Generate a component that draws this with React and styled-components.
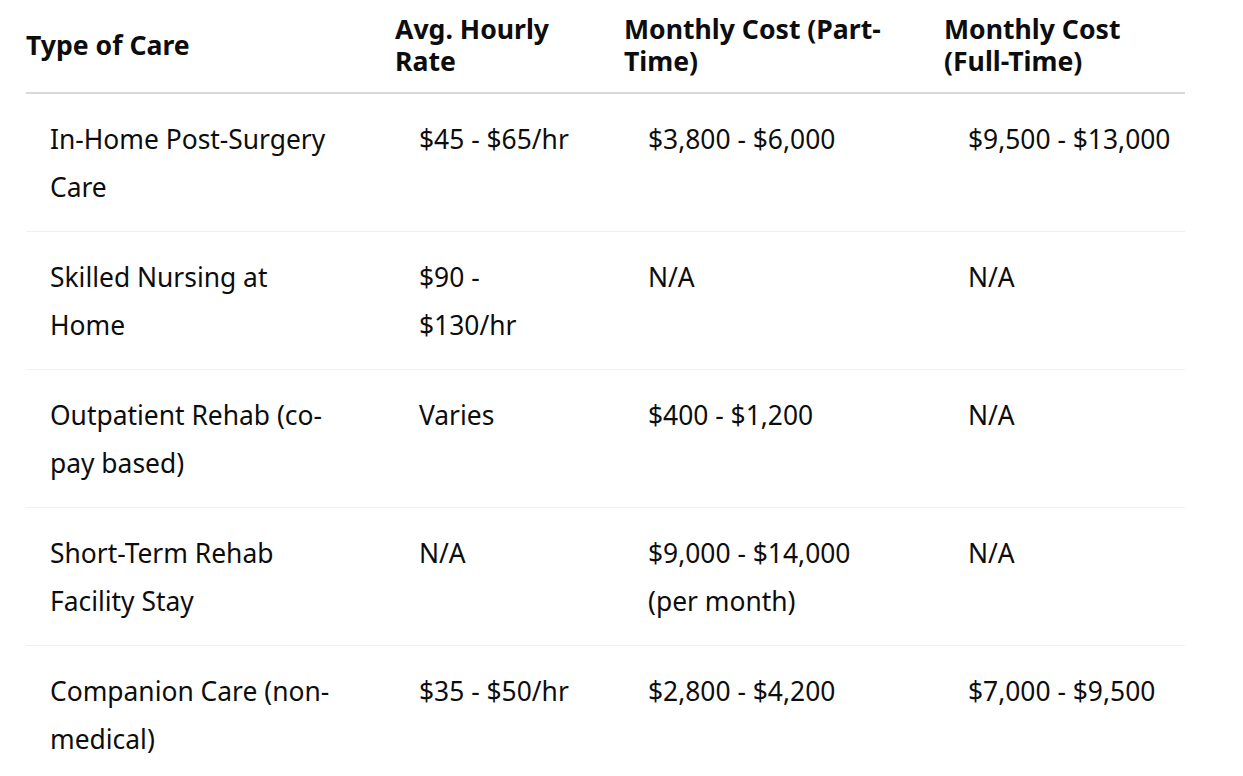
import React from 'react';
import styled, { createGlobalStyle } from 'styled-components';

const GlobalStyle = createGlobalStyle`
  body {
    margin: 0;
    background: #ffffff;
    color: #0d0d0d;
    font-family: 'Noto Sans', 'Open Sans', sans-serif;
  }
`;

// column widths and the right padding that makes each cell wrap like the source
const COLUMNS = [
  { key: 'type', label: 'Type of Care', width: 369, padRight: 58 },
  { key: 'hourly', label: 'Avg. Hourly Rate', width: 229, padRight: 50 },
  { key: 'partTime', label: 'Monthly Cost (Part-Time)', width: 320, padRight: 66 },
  { key: 'fullTime', label: 'Monthly Cost (Full-Time)', width: 241, padRight: 5 },
];

const ROWS = [
  {
    type: 'In-Home Post-Surgery Care',
    hourly: '$45 - $65/hr',
    partTime: '$3,800 - $6,000',
    fullTime: '$9,500 - $13,000',
  },
  {
    type: 'Skilled Nursing at Home',
    hourly: '$90 - $130/hr',
    partTime: 'N/A',
    fullTime: 'N/A',
  },
  {
    type: 'Outpatient Rehab (co-pay based)',
    hourly: 'Varies',
    partTime: '$400 - $1,200',
    fullTime: 'N/A',
  },
  {
    type: 'Short-Term Rehab Facility Stay',
    hourly: 'N/A',
    partTime: '$9,000 - $14,000 (per month)',
    fullTime: 'N/A',
  },
  {
    type: 'Companion Care (non-medical)',
    hourly: '$35 - $50/hr',
    partTime: '$2,800 - $4,200',
    fullTime: '$7,000 - $9,500',
  },
];

const Wrapper = styled.div`
  padding: 0 26px;
`;

const Table = styled.table`
  table-layout: fixed;
  border-collapse: collapse;
  width: 1159px;
`;

const Col = styled.col`
  width: ${(p) => p.$width}px;
`;

const HeadRow = styled.tr`
  border-bottom: 2px solid #d9d9d9;
`;

const HeadCell = styled.th`
  padding: 13px 24px 15px 0;
  text-align: left;
  vertical-align: middle;
  font-size: 26.6px;
  font-weight: 700;
  line-height: 32px;
  color: #0d0d0d;
`;

const BodyRow = styled.tr`
  border-bottom: 1px solid #f0f0f0;
  &:last-child {
    border-bottom: none;
  }
`;

const BodyCell = styled.td`
  padding: 21px ${(p) => p.$padRight}px 20px 24px;
  vertical-align: top;
  font-size: 26.4px;
  font-weight: 400;
  line-height: 48px;
  color: #0d0d0d;
`;

const App = () => (
  <>
    <GlobalStyle />
    <Wrapper>
      <Table>
        <colgroup>
          {COLUMNS.map((c) => (
            <Col key={c.key} $width={c.width} />
          ))}
        </colgroup>
        <thead>
          <HeadRow>
            {COLUMNS.map((c) => (
              <HeadCell key={c.key}>{c.label}</HeadCell>
            ))}
          </HeadRow>
        </thead>
        <tbody>
          {ROWS.map((row) => (
            <BodyRow key={row.type}>
              {COLUMNS.map((c) => (
                <BodyCell key={c.key} $padRight={c.padRight}>
                  {row[c.key]}
                </BodyCell>
              ))}
            </BodyRow>
          ))}
        </tbody>
      </Table>
    </Wrapper>
  </>
);

export default App;
